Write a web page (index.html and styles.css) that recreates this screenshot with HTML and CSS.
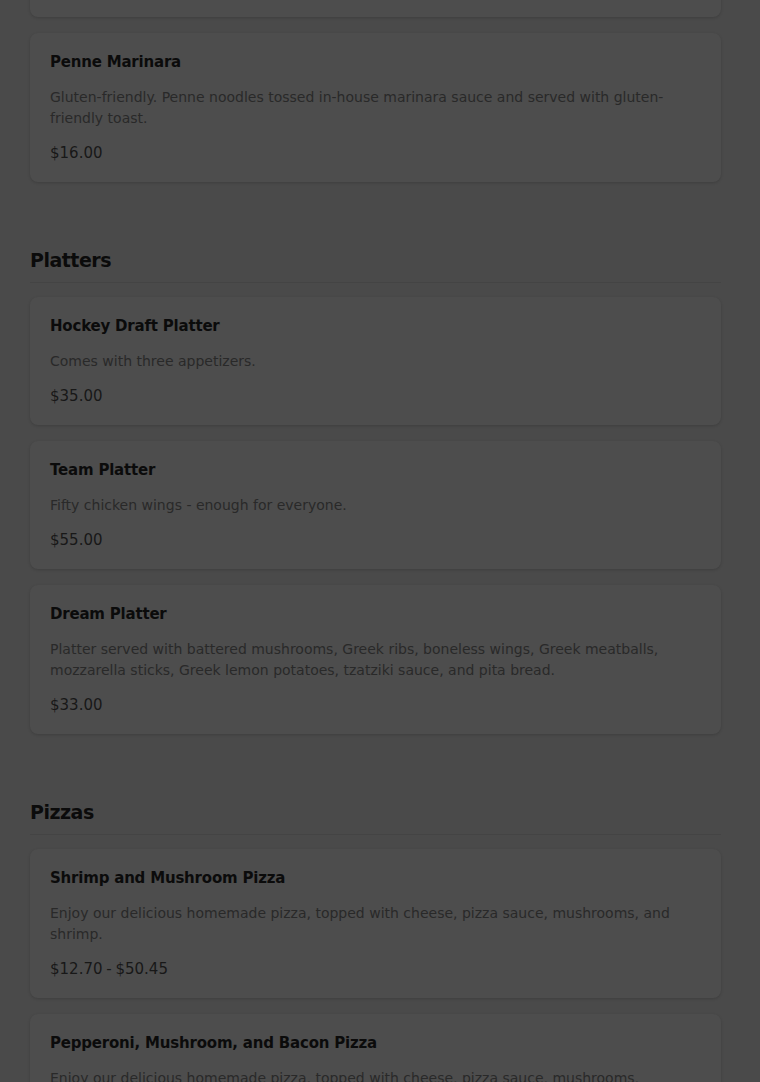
FILE: index.html
```html
<!DOCTYPE html>
<html lang="en">
<head>
<meta charset="utf-8">
<title>Menu</title>
<link rel="stylesheet" href="styles.css">
</head>
<body>
<main class="menu">
  <section class="category">
    <div class="item-list">
      <article class="item item--cut"></article>
      <article class="item">
        <h3 class="item-name">Penne Marinara</h3>
        <p class="item-desc">Gluten-friendly. Penne noodles tossed in-house marinara sauce and served with gluten-friendly toast.</p>
        <p class="item-price">$16.00</p>
      </article>
    </div>
  </section>

  <section class="category">
    <h2 class="category-title">Platters</h2>
    <div class="item-list">
      <article class="item">
        <h3 class="item-name">Hockey Draft Platter</h3>
        <p class="item-desc">Comes with three appetizers.</p>
        <p class="item-price">$35.00</p>
      </article>
      <article class="item">
        <h3 class="item-name">Team Platter</h3>
        <p class="item-desc">Fifty chicken wings - enough for everyone.</p>
        <p class="item-price">$55.00</p>
      </article>
      <article class="item">
        <h3 class="item-name">Dream Platter</h3>
        <p class="item-desc">Platter served with battered mushrooms, Greek ribs, boneless wings, Greek meatballs, mozzarella sticks, Greek lemon potatoes, tzatziki sauce, and pita bread.</p>
        <p class="item-price">$33.00</p>
      </article>
    </div>
  </section>

  <section class="category">
    <h2 class="category-title">Pizzas</h2>
    <div class="item-list">
      <article class="item">
        <h3 class="item-name">Shrimp and Mushroom Pizza</h3>
        <p class="item-desc">Enjoy our delicious homemade pizza, topped with cheese, pizza sauce, mushrooms, and shrimp.</p>
        <p class="item-price">$12.70 - $50.45</p>
      </article>
      <article class="item">
        <h3 class="item-name">Pepperoni, Mushroom, and Bacon Pizza</h3>
        <p class="item-desc">Enjoy our delicious homemade pizza, topped with cheese, pizza sauce, mushrooms, pepperoni, and bacon.</p>
        <p class="item-price">$12.70 - $50.45</p>
      </article>
    </div>
  </section>
</main>
</body>
</html>
```

FILE: styles.css
```css
html, body {
  margin: 0;
  padding: 0;
}

body {
  background: #4a4a4a;
  font-family: "DejaVu Sans", "Liberation Sans", sans-serif;
  color: #0b0b0b;
  overflow: hidden;
}

.menu {
  display: flex;
  flex-direction: column;
  gap: 63px;
  width: 691px;
  margin-left: 30px;
  margin-top: -37px;
}

.category-title {
  margin: 0 0 14px;
  padding-bottom: 7px;
  border-bottom: 1px solid #444444;
  font-size: 19px;
  line-height: 30px;
  font-weight: 700;
  letter-spacing: -0.5px;
  color: #0b0b0b;
}

.item-list {
  display: flex;
  flex-direction: column;
  gap: 16px;
}

.item {
  background: #4d4d4d;
  border-radius: 8px;
  padding: 17px 20px;
  box-shadow: 0 1px 3px rgba(0, 0, 0, 0.16);
}

.item--cut {
  height: 20px;
}

.item-name {
  margin: 0 0 13px;
  font-size: 15px;
  line-height: 24px;
  font-weight: 700;
  letter-spacing: -0.2px;
  color: #0b0b0b;
}

.item-desc {
  margin: 0 0 12px;
  font-size: 14px;
  line-height: 21px;
  color: #292929;
}

.item-price {
  margin: 0;
  font-size: 15px;
  line-height: 24px;
  word-spacing: -1px;
  color: #181818;
}
```
